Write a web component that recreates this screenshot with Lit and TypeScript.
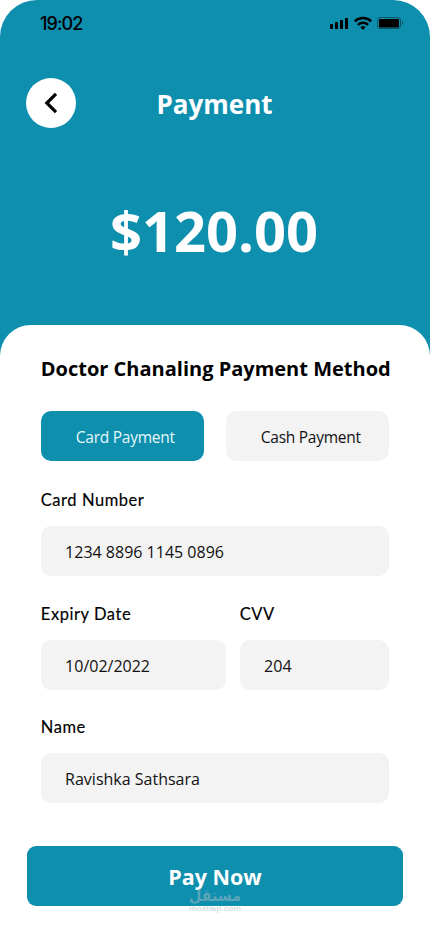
import { LitElement, html, css } from "lit";
import { customElement, property, state } from "lit/decorators.js";
import { classMap } from "lit/directives/class-map.js";

@customElement("status-bar")
class StatusBar extends LitElement {
  static styles = css`
    :host { display: flex; justify-content: space-between; height: 47px; padding: 0 26px 0 40px; box-sizing: border-box; color: #000; }
    .time { font: 500 18px/24px Inter, sans-serif; letter-spacing: -0.9px; margin-top: 12px; }
    svg { display: block; margin-top: 16px; }
  `;
  render() {
    return html`
      <span class="time">19:02</span>
      <svg width="74" height="15" viewBox="0 0 74 15">
        <rect x="0" y="8" width="3" height="5" rx=".6" />
        <rect x="5" y="6" width="3" height="7" rx=".6" />
        <rect x="10" y="4" width="3" height="9" rx=".6" />
        <rect x="15" y="2" width="3" height="11" rx=".6" />
        <g fill="none" stroke="#000" stroke-width="2.5">
          <path d="M24.8 5.4a11.7 11.7 0 0 1 16.4 0" />
          <path d="M27.9 8.8a7.3 7.3 0 0 1 10.2 0" />
        </g>
        <path d="M30.4 11.2a3.8 3.8 0 0 1 5.2 0L33 14z" />
        <rect x="47.5" y="1.5" width="23" height="11" rx="2.6" fill="none" stroke="#000" stroke-opacity=".4" />
        <rect x="49" y="3" width="20" height="8.4" rx="1" />
        <path d="M72 5.2c1.6.6 1.6 3 0 3.6z" fill-opacity=".5" />
      </svg>
    `;
  }
}

@customElement("form-field")
class FormField extends LitElement {
  @property() label = "";
  @property() value = "";
  static styles = css`
    :host { display: block; }
    .label { font: 400 16.5px/25px Lato, sans-serif; letter-spacing: 0.55px; -webkit-text-stroke: 0.15px #000; color: #000; white-space: nowrap; }
    .box { height: 50px; margin-top: 13px; border-radius: 10px; background: #f3f3f3; padding-left: 24.3px; font: 400 16px/52px "Open Sans", sans-serif; color: #111; box-sizing: border-box; white-space: nowrap; }
  `;
  render() {
    return html`<div class="label">${this.label}</div><div class="box">${this.value}</div>`;
  }
}

@customElement("app-root")
class AppRoot extends LitElement {
  @state() private method = "card";

  static styles = css`
    :host { display: block; width: 430px; height: 932px; overflow: hidden; background: #fff; font-family: "Open Sans", sans-serif; }
    .hero { height: 362px; background: #0e8fae; border-radius: 37px 37px 0 0; color: #fff; }
    .bar { display: grid; grid-template-columns: 50px 1fr 50px; align-items: center; padding: 30.7px 26.7px 0 25.7px; }
    .back { width: 50px; height: 50px; border-radius: 50%; border: 0; padding: 0; background: #fff; display: grid; place-items: center; }
    .title { margin: 0; padding-top: 2px; text-align: center; font-size: 26px; line-height: 36px; font-weight: 700; }
    .amount { margin-top: 63.3px; text-align: center; font-size: 56px; line-height: 78px; font-weight: 700; padding-right: 2px; }
    .sheet { height: 607px; margin-top: -37px; background: #fff; border-radius: 31px 31px 0 0; padding: 29px 41px 0 40.8px; box-sizing: border-box; display: flex; flex-direction: column; }
    .heading { margin: 0; font-size: 20px; line-height: 30px; font-weight: 700; color: #000; white-space: nowrap; }
    .methods { display: flex; gap: 22px; margin: 26.5px 0 27.5px; }
    .method { width: 163px; height: 50px; border: 0; border-radius: 10px; background: #f3f3f3; color: #111; font: 400 15.5px/22px "Open Sans", sans-serif; letter-spacing: -0.25px; padding: 2px 0 0 7px; white-space: nowrap; }
    .active { background: #0e8fae; color: #e6f7fb; padding-left: 6px; }
    .fields { display: grid; grid-template-columns: 185px 149px; column-gap: 14px; row-gap: 25.6px; }
    .wide { grid-column: 1 / -1; }
    .pay { position: relative; height: 60px; margin: 42.9px -14px 0; border-radius: 9px; background: #0e8fae; color: #fff; text-align: center; font-size: 21.5px; line-height: 61px; font-weight: 700; }
    .mark { position: absolute; left: 160px; top: 36px; width: 56px; height: 36px; overflow: visible; }
  `;

  private tab(id: string, text: string) {
    return html`<button class=${classMap({ method: true, active: this.method === id })} @click=${() => (this.method = id)}>${text}</button>`;
  }

  render() {
    return html`
      <header class="hero">
        <status-bar></status-bar>
        <div class="bar">
          <button class="back" aria-label="Back">
            <svg width="50" height="50" viewBox="0 0 50 50"><path d="M30 15.8 20.8 25 30 34.2" fill="none" stroke="#000" stroke-width="3.2" /></svg>
          </button>
          <h1 class="title">Payment</h1>
        </div>
        <div class="amount">$120.00</div>
      </header>
      <main class="sheet">
        <h2 class="heading">Doctor Chanaling Payment Method</h2>
        <div class="methods">${this.tab("card", "Card Payment")}${this.tab("cash", "Cash Payment")}</div>
        <div class="fields">
          <form-field class="wide" label="Card Number" value="1234 8896 1145 0896"></form-field>
          <form-field label="Expiry Date" value="10/02/2022"></form-field>
          <form-field label="CVV" value="204"></form-field>
          <form-field class="wide" label="Name" value="Ravishka Sathsara"></form-field>
        </div>
        <div class="pay">
          Pay Now
          <svg class="mark" viewBox="0 0 56 36">
            <text x="28" y="19" text-anchor="middle" textLength="52" lengthAdjust="spacingAndGlyphs" font-family="DejaVu Sans, sans-serif" font-size="16" font-weight="700" fill="#8fb5c0" fill-opacity=".6">مستقل</text>
            <text x="28" y="29" text-anchor="middle" textLength="52" lengthAdjust="spacingAndGlyphs" font-family="Liberation Sans, sans-serif" font-size="8" font-weight="700" fill="#a8bcc2" fill-opacity=".5">mostaql.com</text>
          </svg>
        </div>
      </main>
    `;
  }
}
